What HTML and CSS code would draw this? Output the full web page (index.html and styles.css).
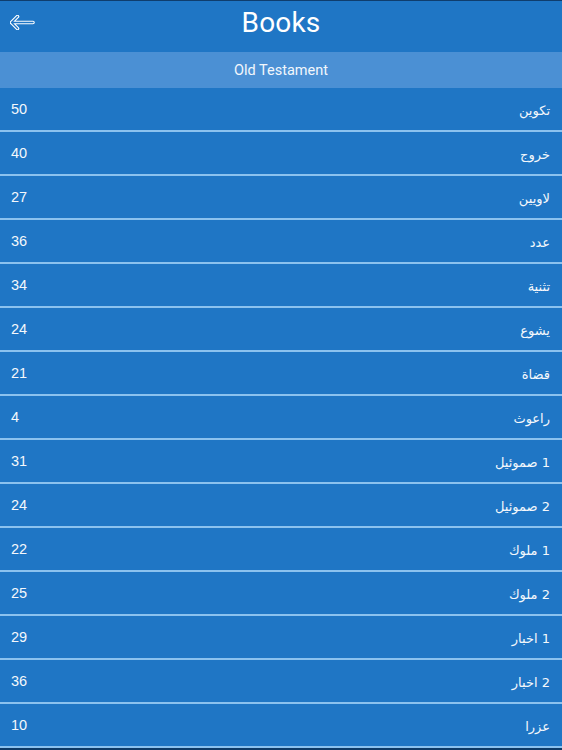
FILE: index.html
```html
<!DOCTYPE html>
<html>
<head>
<meta charset="utf-8">
<link rel="stylesheet" href="styles.css">
</head>
<body>
<div class="app">
  <header class="topbar">
    <svg class="back" width="25" height="15" viewBox="0 0 25 15">
      <path d="M7.5 1.5 L1.5 7.5 L7.5 13.5 M1.5 7.5 L23 7.5" fill="none" stroke="#fff" stroke-width="3.6" stroke-linecap="round" stroke-linejoin="round"/>
      <path d="M7.5 1.5 L1.5 7.5 L7.5 13.5 M1.5 7.5 L23 7.5" fill="none" stroke="#1f76c5" stroke-width="1.4" stroke-linecap="round" stroke-linejoin="round"/>
    </svg>
    <h1 class="title">Books</h1>
  </header>
  <div class="section">Old Testament</div>
  <ul class="list">
    <li class="row"><span class="count">50</span><span class="name">تكوين</span></li>
    <li class="row"><span class="count">40</span><span class="name">خروج</span></li>
    <li class="row"><span class="count">27</span><span class="name">لاويين</span></li>
    <li class="row"><span class="count">36</span><span class="name">عدد</span></li>
    <li class="row"><span class="count">34</span><span class="name">تثنية</span></li>
    <li class="row"><span class="count">24</span><span class="name">يشوع</span></li>
    <li class="row"><span class="count">21</span><span class="name">قضاة</span></li>
    <li class="row"><span class="count">4</span><span class="name">راعوث</span></li>
    <li class="row"><span class="count">31</span><span class="name">1 صموئيل</span></li>
    <li class="row"><span class="count">24</span><span class="name">2 صموئيل</span></li>
    <li class="row"><span class="count">22</span><span class="name">1 ملوك</span></li>
    <li class="row"><span class="count">25</span><span class="name">2 ملوك</span></li>
    <li class="row"><span class="count">29</span><span class="name">1 اخبار</span></li>
    <li class="row"><span class="count">36</span><span class="name">2 اخبار</span></li>
    <li class="row"><span class="count">10</span><span class="name">عزرا</span></li>
  </ul>
</div>
</body>
</html>
```

FILE: styles.css
```css
html, body {
  margin: 0;
  padding: 0;
  background: #0e3a66;
  height: 100%;
  overflow: hidden;
}
.app {
  width: 562px;
  font-family: "Helvetica Neue", "Liberation Sans", "DejaVu Sans", sans-serif;
  color: #fff;
}
.topbar {
  position: relative;
  height: 51px;
  border-top: 1px solid #0f3d6d;
  background: #1f76c5;
  display: flex;
  align-items: center;
  justify-content: center;
}
.back {
  position: absolute;
  left: 10px;
  top: 14px;
}
.title {
  margin: 0;
  font-family: Roboto, "Liberation Sans", sans-serif;
  font-weight: 400;
  font-size: 28px;
  letter-spacing: 0.2px;
  line-height: 1;
  margin-top: -7px;
}
.section {
  height: 36px;
  background: #4b90d4;
  display: flex;
  align-items: center;
  justify-content: center;
  font-family: Roboto, "Liberation Sans", sans-serif;
  font-size: 14.5px;
  color: #f2f7fc;
}
.list {
  list-style: none;
  margin: 0;
  padding: 0;
}
.row {
  height: 42px;
  border-bottom: 2px solid #8bc2ef;
  background: #1f76c5;
  display: flex;
  align-items: center;
  justify-content: space-between;
  padding: 0 12px 0 11px;
  font-size: 14.5px;
}
.count {
  font-family: "Liberation Sans", sans-serif;
  color: #f4f8fc;
  margin-top: -1px;
}
.name {
  direction: rtl;
  font-family: "DejaVu Sans", sans-serif;
  font-size: 13px;
  color: #f4f8fc;
  margin-top: 2px;
}
```
